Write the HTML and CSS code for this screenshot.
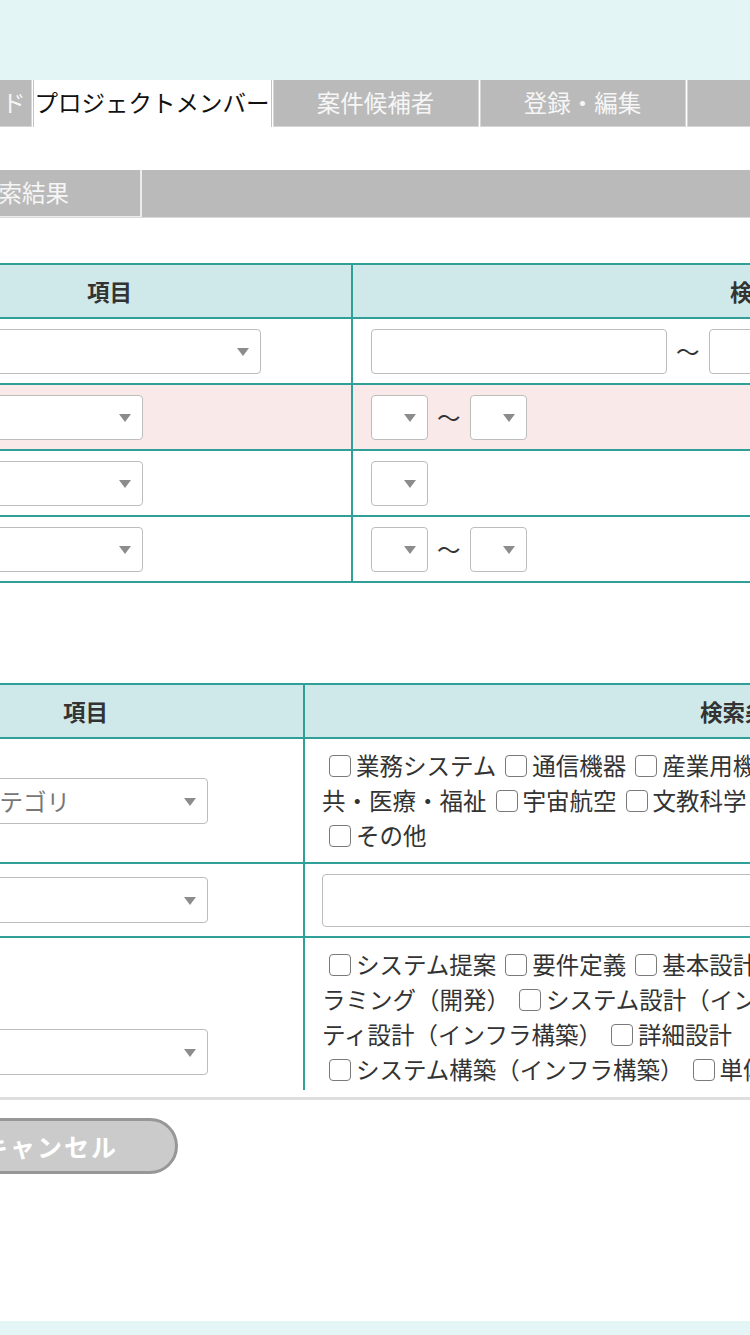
FILE: index.html
```html
<!DOCTYPE html>
<html lang="ja">

<head>
  <meta charset="UTF-8">
  <meta name="viewport" content="width=device-width, initial-scale=1.0">
  <title>プロジェクトメンバー検索</title>
  <link rel="stylesheet" href="styles.css">
</head>

<body>
  <div class="viewport">
    <div class="top-band"></div>

    <div class="page">
      <!-- メインタブ -->
      <ul class="tabs">
        <li class="tab">プロジェクトガイド</li>
        <li class="tab active">プロジェクトメンバー</li>
        <li class="tab">案件候補者</li>
        <li class="tab">登録・編集</li>
        <li class="tab filler"></li>
      </ul>

      <!-- サブタブ -->
      <ul class="subtabs">
        <li class="subtab">検索結果</li>
      </ul>

      <!-- 検索条件1 -->
      <table class="cond cond-basic">
        <tr>
          <th class="col-item">項目</th>
          <th class="col-value">検索条件</th>
        </tr>
        <tr>
          <td class="col-item"><div class="select select-lg"><select><option></option></select></div></td>
          <td class="col-value">
            <div class="range">
              <input type="text" class="text">
              <span class="tilde">～</span>
              <input type="text" class="text">
            </div>
          </td>
        </tr>
        <tr class="warn">
          <td class="col-item"><div class="select select-md"><select><option></option></select></div></td>
          <td class="col-value">
            <div class="range">
              <div class="select select-sm"><select><option></option></select></div>
              <span class="tilde">～</span>
              <div class="select select-sm"><select><option></option></select></div>
            </div>
          </td>
        </tr>
        <tr>
          <td class="col-item"><div class="select select-md"><select><option></option></select></div></td>
          <td class="col-value">
            <div class="range">
              <div class="select select-sm"><select><option></option></select></div>
            </div>
          </td>
        </tr>
        <tr>
          <td class="col-item"><div class="select select-md"><select><option></option></select></div></td>
          <td class="col-value">
            <div class="range">
              <div class="select select-sm"><select><option></option></select></div>
              <span class="tilde">～</span>
              <div class="select select-sm"><select><option></option></select></div>
            </div>
          </td>
        </tr>
      </table>

      <!-- 検索条件2（スクロール領域） -->
      <div class="result-area">
        <div class="scroll-box">
          <table class="cond cond-detail">
            <tr>
              <th class="col-item">項目</th>
              <th class="col-value">検索条件</th>
            </tr>
            <tr>
              <td class="col-item"><div class="select select-wide"><select class="placeholder"><option>カテゴリ</option></select></div></td>
              <td class="col-value checks">
                <div class="line">
                  <label class="chk"><input type="checkbox">業務システム</label><label class="chk"><input type="checkbox">通信機器</label><label class="chk"><input type="checkbox">産業用機器</label><label class="chk"><input type="checkbox">家電</label><label class="chk"><input type="checkbox">公</label>
                </div>
                <div class="line">
                  <span class="tail">共・医療・福祉</span><label class="chk"><input type="checkbox">宇宙航空</label><label class="chk"><input type="checkbox">文教科学</label>
                </div>
                <div class="line">
                  <label class="chk"><input type="checkbox">その他</label>
                </div>
              </td>
            </tr>
            <tr>
              <td class="col-item"><div class="select select-wide"><select><option></option></select></div></td>
              <td class="col-value keyword"><input type="text" class="text text-wide"></td>
            </tr>
            <tr>
              <td class="col-item"><div class="select select-wide"><select><option></option></select></div></td>
              <td class="col-value checks">
                <div class="line">
                  <label class="chk"><input type="checkbox">システム提案</label><label class="chk"><input type="checkbox">要件定義</label><label class="chk"><input type="checkbox">基本設計</label><label class="chk"><input type="checkbox">プログ</label>
                </div>
                <div class="line">
                  <span class="tail">ラミング（開発）</span><label class="chk"><input type="checkbox">システム設計（インフラ構築）</label><label class="chk"><input type="checkbox">セキュリ</label>
                </div>
                <div class="line">
                  <span class="tail">ティ設計（インフラ構築）</span><label class="chk"><input type="checkbox">詳細設計</label>
                </div>
                <div class="line">
                  <label class="chk"><input type="checkbox">システム構築（インフラ構築）</label><label class="chk"><input type="checkbox">単体テスト</label>
                </div>
                <div class="line">
                  <label class="chk"><input type="checkbox">結合テスト</label><label class="chk"><input type="checkbox">総合テスト</label><label class="chk"><input type="checkbox">運用テスト</label>
                </div>
                <div class="line">
                  <label class="chk"><input type="checkbox">運用・保守</label><label class="chk"><input type="checkbox">その他</label>
                </div>
              </td>
            </tr>
          </table>
        </div>
      </div>

      <div class="actions">
        <button type="button" class="btn-cancel">キャンセル</button>
      </div>
    </div>

    <div class="bottom-band"></div>
  </div>
</body>

</html>
```

FILE: styles.css
```css
html,
body {
  margin: 0;
  padding: 0;
}

body {
  font-family: "Noto Sans CJK JP", "Noto Sans", sans-serif;
  font-size: 23.5px;
  color: #333;
  background-color: #fff;
}

ul {
  padding: 0;
  margin: 0;
  list-style: none;
}

.viewport {
  display: flex;
  flex-direction: column;
  width: 750px;
  min-height: 1335px;
  overflow: hidden;
}

.top-band {
  flex-shrink: 0;
  height: 80px;
  background-color: #e4f5f6;
}

.bottom-band {
  flex-shrink: 0;
  height: 14px;
  margin-top: auto;
  background-color: #e4f5f6;
}

/* 横スクロールされた状態の表示 */
.page {
  width: 1400px;
  margin-left: -134px;
}

/* メインタブ */
.tabs {
  display: flex;
  gap: 1px;
  height: 47px;
  margin-left: -54px;
}

.tabs .tab {
  box-sizing: border-box;
  min-width: 206px;
  padding: 0 1px;
  border: 1px solid #d6d6d6;
  border-top: 0;
  background-color: #bababa;
  color: #f6f6f6;
  text-align: center;
  line-height: 44px;
  white-space: nowrap;
}

.tabs .tab:first-child {
  padding-right: 5px;
}

.tabs .tab.active {
  border-color: #c4c4c4;
  border-bottom: 0;
  background-color: #fff;
  color: #111;
}

.tabs .tab.filler {
  flex: 1;
}

/* サブタブ */
.subtabs {
  display: flex;
  height: 47px;
  margin-top: 43px;
  margin-left: 38px;
  border-bottom: 1px solid #d9d9d9;
  background-color: #bababa;
}

.subtabs .subtab {
  box-sizing: border-box;
  width: 238px;
  border-right: 2px solid #ececec;
  border-bottom: 1px solid #ececec;
  color: #f6f6f6;
  text-align: center;
  line-height: 44px;
}

/* 検索条件テーブル */
.cond {
  table-layout: fixed;
  border-collapse: separate;
  border-spacing: 0;
  border-top: 2px solid #2f9f97;
  border-left: 2px solid #2f9f97;
}

.cond th,
.cond td {
  box-sizing: border-box;
  padding: 0;
  border-right: 2px solid #2f9f97;
  border-bottom: 2px solid #2f9f97;
  text-align: left;
}

.cond th {
  height: 54px;
  background-color: #cfe9ea;
  font-size: 22.5px;
  font-weight: bold;
  color: #333;
  text-align: center;
}

.cond td {
  height: 66px;
}

.cond td.col-item {
  padding-left: 94px;
}

.cond-basic {
  width: 1333px;
  margin-top: 45px;
}

.cond-basic .col-item {
  width: 485px;
}

.cond-basic td.col-value {
  padding-left: 18px;
}

.cond-basic .warn td {
  background-color: #f9e9e9;
}

.cond-detail {
  width: 1321px;
}

.cond-detail .col-item {
  width: 437px;
}

.cond-detail td.col-value {
  padding-left: 17px;
}

.cond-detail td.keyword {
  height: 74px;
}

/* 入力部品 */
.range {
  display: flex;
  align-items: center;
  gap: 9px;
}

.tilde {
  color: #333;
}

.text {
  box-sizing: border-box;
  width: 296px;
  height: 45px;
  padding: 0 10px;
  border: 1.5px solid #bdbdbd;
  border-radius: 4px;
  background-color: #fff;
  font: inherit;
}

.text-wide {
  display: block;
  width: 900px;
  height: 53px;
}

.select {
  position: relative;
  display: inline-block;
  vertical-align: middle;
}

.select::after {
  position: absolute;
  top: 50%;
  right: 12px;
  content: "";
  margin-top: -3px;
  border-top: 8px solid #8c8c8c;
  border-left: 6.5px solid transparent;
  border-right: 6.5px solid transparent;
}

.select select {
  display: block;
  box-sizing: border-box;
  width: 100%;
  height: 45px;
  padding: 0 30px 0 13px;
  border: 1.5px solid #bdbdbd;
  border-radius: 4px;
  background-color: #fff;
  font: inherit;
  color: #333;
  appearance: none;
  -webkit-appearance: none;
}

.select select.placeholder {
  color: #777;
}

.select-lg {
  width: 299px;
}

.select-md {
  width: 181px;
}

.select-sm {
  width: 57px;
}

.select-wide {
  width: 246px;
}

.select-wide select {
  height: 46px;
}

/* チェックボックス */
.checks {
  padding: 9px 0 9px 17px !important;
  vertical-align: top;
}

.checks .line {
  height: 35px;
  line-height: 35px;
  white-space: nowrap;
}

.chk,
.tail {
  margin-right: 2px;
  color: #333;
}

.chk input {
  box-sizing: border-box;
  width: 22px;
  height: 22px;
  margin: 0 5px 0 7px;
  border: 1.5px solid #7a7a7a;
  border-radius: 4px;
  background-color: #fff;
  vertical-align: middle;
  position: relative;
  top: -3px;
  appearance: none;
  -webkit-appearance: none;
}

/* スクロール領域 */
.result-area {
  margin-top: 100px;
  padding-bottom: 7px;
  border-bottom: 3px solid #dedede;
}

.scroll-box {
  height: 407px;
  overflow: hidden;
}

/* ボタン */
.actions {
  padding-top: 18px;
}

.btn-cancel {
  display: block;
  width: 255px;
  height: 56px;
  margin-left: 57px;
  padding: 0;
  border: 3px solid #979797;
  border-radius: 28px;
  background-color: #cbcbcb;
  color: #fff;
  font-family: "Noto Sans CJK JP", sans-serif;
  font-size: 25px;
  font-weight: bold;
  letter-spacing: 2px;
}
```
